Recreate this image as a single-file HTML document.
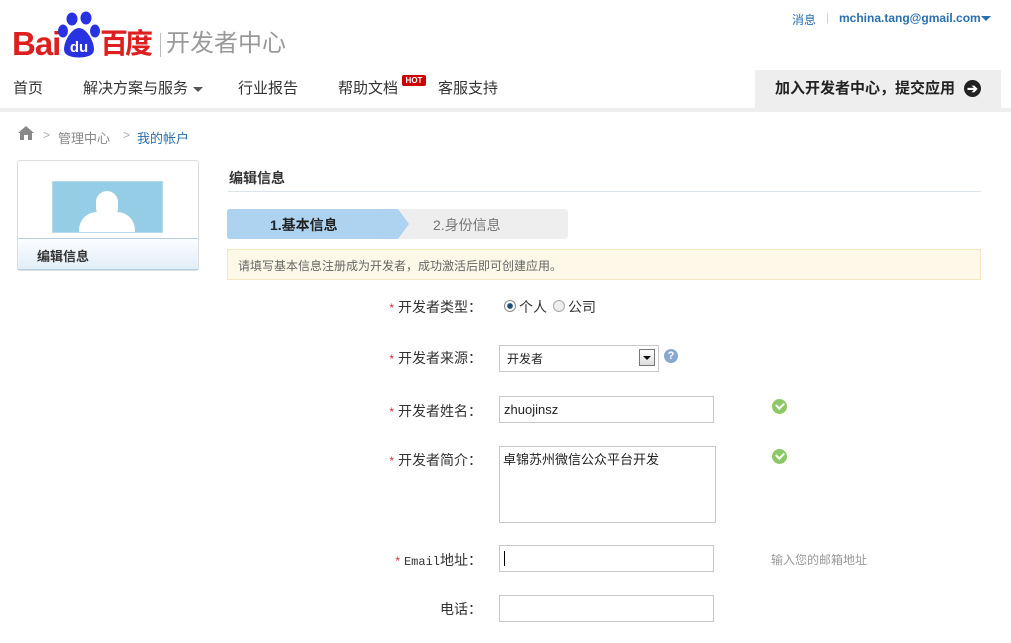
<!DOCTYPE html>
<html><head><meta charset="utf-8"><style>
*{margin:0;padding:0;box-sizing:border-box}
body{width:1011px;height:643px;overflow:hidden;background:#fff;position:relative;font-family:"Liberation Sans","Noto Sans CJK SC",sans-serif;color:#333}
.a{position:absolute;white-space:nowrap}
.nav{font-size:15px;color:#333;top:79px;line-height:20px}
.lbl{font-size:14px;color:#333;line-height:18px;text-align:right;width:126px;left:356px}
.lbl b{color:#c33;font-weight:normal;margin-right:4px;font-size:12px}
.inp{border:1px solid #c8c8c8;background:#fff}
.chk{width:15px;height:15px;border-radius:50%;background:#8cc866}
.chk:after{content:"";position:absolute;left:4px;top:3px;width:6px;height:4px;border-left:2px solid #fff;border-bottom:2px solid #fff;transform:rotate(-45deg)}
</style></head><body>
<!-- logo -->
<div class="a" style="left:12px;top:25px;font:bold 33px 'Liberation Sans',sans-serif;color:#de1f1f;letter-spacing:-1px">Bai</div>
<svg class="a" style="left:58px;top:11px" width="44" height="48" viewBox="0 0 44 48">
<ellipse cx="14" cy="8" rx="5.5" ry="6.5" fill="#2932e1"/><ellipse cx="28" cy="7" rx="5.5" ry="6.5" fill="#2932e1"/>
<ellipse cx="5" cy="20" rx="5" ry="6.5" fill="#2932e1"/><ellipse cx="37" cy="20" rx="5" ry="6.5" fill="#2932e1"/>
<path d="M21 17C12 17 3 36 7 42C11 48 31 48 35 42C39 36 30 17 21 17Z" fill="#2932e1"/>
<text x="21" y="41" font-family="Liberation Sans" font-size="15" font-weight="bold" fill="#fff" text-anchor="middle">du</text></svg>
<div class="a" style="left:100px;top:25px;font:bold 28px 'Noto Sans CJK SC',sans-serif;color:#de1f1f;line-height:34px;letter-spacing:-3px">百度</div>
<div class="a" style="left:160px;top:33px;width:1px;height:24px;background:#bbb"></div>
<div class="a" style="left:166px;top:28px;font-size:24px;color:#999;line-height:32px">开发者中心</div>
<!-- top right -->
<div class="a" style="left:792px;top:11px;font-size:12px;color:#2a6fb0">消息</div>
<div class="a" style="left:826px;top:12px;font-size:11px;color:#ccc">|</div>
<div class="a" style="left:839px;top:11px;font:bold 12px 'Liberation Sans',sans-serif;color:#2a6fb0">mchina.tang@gmail.com</div>
<div class="a" style="left:981px;top:16px;border:5px solid transparent;border-top:5px solid #2a6fb0;border-bottom:0"></div>
<!-- nav -->
<div class="a nav" style="left:13px">首页</div>
<div class="a nav" style="left:83px">解决方案与服务</div>
<div class="a" style="left:193px;top:87px;border:5px solid transparent;border-top:5px solid #555;border-bottom:0"></div>
<div class="a nav" style="left:238px">行业报告</div>
<div class="a nav" style="left:338px">帮助文档</div>
<div class="a" style="left:402px;top:75px;width:24px;height:11px;background:#c00;color:#fff;font:bold 8px/11px 'Liberation Sans',sans-serif;text-align:center;border-radius:2px">HOT</div>
<div class="a nav" style="left:438px">客服支持</div>
<div class="a" style="left:755px;top:70px;width:246px;height:38px;background:#eee"></div>
<div class="a" style="left:775px;top:79px;font-size:15px;font-weight:bold;color:#222;line-height:20px">加入开发者中心，提交应用</div>
<div class="a" style="left:964px;top:80px;width:17px;height:17px;border-radius:50%;background:#222;color:#fff;font:bold 13px/17px sans-serif;text-align:center">➔</div>
<div class="a" style="left:0;top:108px;width:1011px;height:4px;background:#eee"></div>
<!-- breadcrumb -->
<svg class="a" style="left:17px;top:125px" width="18" height="16" viewBox="0 0 18 16"><path d="M9 1L1 8h2v7h4v-5h4v5h4V8h2z" fill="#888"/></svg>
<div class="a" style="left:43px;top:128px;font-size:12px;color:#aaa">&gt;</div>
<div class="a" style="left:58px;top:128px;font-size:13px;color:#888">管理中心</div>
<div class="a" style="left:123px;top:128px;font-size:12px;color:#aaa">&gt;</div>
<div class="a" style="left:137px;top:128px;font-size:13px;color:#2a6fb0">我的帐户</div>
<!-- left box -->
<div class="a" style="left:17px;top:160px;width:182px;height:111px;border:1px solid #ddd;border-radius:3px"></div>
<div class="a" style="left:52px;top:181px;width:111px;height:52px;background:#96cde6;border:1px solid #b8d9ea;overflow:hidden">
<div class="a" style="left:43px;top:9px;width:22px;height:28px;border-radius:11px;background:#fff"></div>
<div class="a" style="left:26px;top:30px;width:56px;height:30px;border-radius:18px 18px 0 0;background:#fff"></div></div>
<div class="a" style="left:18px;top:238px;width:180px;height:32px;background:linear-gradient(#fbfdff,#e2eef8);border-top:1px solid #b4cde0;border-bottom:1px solid #b4cde0"></div>
<div class="a" style="left:37px;top:246px;font-size:13px;font-weight:bold;color:#333">编辑信息</div>
<!-- right -->
<div class="a" style="left:229px;top:168px;font-size:14px;font-weight:bold;color:#333">编辑信息</div>
<div class="a" style="left:228px;top:191px;width:753px;height:1px;background:#dde3ea"></div>
<div class="a" style="left:227px;top:209px;width:341px;height:30px;background:#eee;border-radius:3px"></div>
<svg class="a" style="left:227px;top:209px" width="184" height="30"><path d="M3 0H171L182 15L171 30H3Q0 30 0 27V3Q0 0 3 0Z" fill="#aed3f0"/></svg>
<div class="a" style="left:270px;top:215px;font-size:14px;font-weight:bold;color:#222">1.基本信息</div>
<div class="a" style="left:433px;top:215px;font-size:14px;color:#777">2.身份信息</div>
<div class="a" style="left:227px;top:249px;width:754px;height:31px;background:#fdf8e7;border:1px solid #f3e6c0"></div>
<div class="a" style="left:238px;top:257px;font-size:12px;color:#666">请填写基本信息注册成为开发者，成功激活后即可创建应用。</div>
<!-- form -->
<div class="a lbl" style="top:298px"><b>*</b>开发者类型：</div>
<div class="a" style="left:504px;top:300px;width:12px;height:12px;border-radius:50%;border:1px solid #888;background:radial-gradient(#1a4f7a 35%,#fff 45%)"></div>
<div class="a" style="left:519px;top:297px;font-size:14px">个人</div>
<div class="a" style="left:553px;top:300px;width:12px;height:12px;border-radius:50%;border:1px solid #aaa;background:#eee"></div>
<div class="a" style="left:568px;top:297px;font-size:14px">公司</div>

<div class="a lbl" style="top:349px"><b>*</b>开发者来源：</div>
<div class="a inp" style="left:499px;top:345px;width:160px;height:27px"></div>
<div class="a" style="left:507px;top:350px;font-size:12px;color:#222">开发者</div>
<div class="a" style="left:639px;top:349px;width:16px;height:17px;border:1px solid #777;background:linear-gradient(#fff,#ddd)"><div class="a" style="left:3px;top:6px;border:4px solid transparent;border-top:4px solid #111;border-bottom:0"></div></div>
<div class="a" style="left:664px;top:349px;width:14px;height:14px;border-radius:50%;background:#88a8d0;color:#fff;font:bold 11px/14px sans-serif;text-align:center">?</div>

<div class="a lbl" style="top:402px"><b>*</b>开发者姓名：</div>
<div class="a inp" style="left:499px;top:396px;width:215px;height:27px"></div>
<div class="a" style="left:504px;top:402px;font-size:13px;color:#222">zhuojinsz</div>
<div class="a chk" style="left:772px;top:399px"></div>

<div class="a lbl" style="top:451px"><b>*</b>开发者简介：</div>
<div class="a inp" style="left:499px;top:446px;width:217px;height:77px"></div>
<div class="a" style="left:503px;top:449px;font-size:13px;color:#222">卓锦苏州微信公众平台开发</div>
<div class="a chk" style="left:772px;top:449px"></div>

<div class="a lbl" style="top:551px"><b>*</b><span style="font-family:'Liberation Mono',monospace;font-size:12px">Email</span>地址：</div>
<div class="a inp" style="left:499px;top:545px;width:215px;height:27px"></div>
<div class="a" style="left:504px;top:551px;width:1px;height:15px;background:#000"></div>
<div class="a" style="left:771px;top:551px;font-size:12px;color:#999">输入您的邮箱地址</div>

<div class="a lbl" style="top:600px">电话：</div>
<div class="a inp" style="left:499px;top:595px;width:215px;height:27px"></div>
</body></html>
